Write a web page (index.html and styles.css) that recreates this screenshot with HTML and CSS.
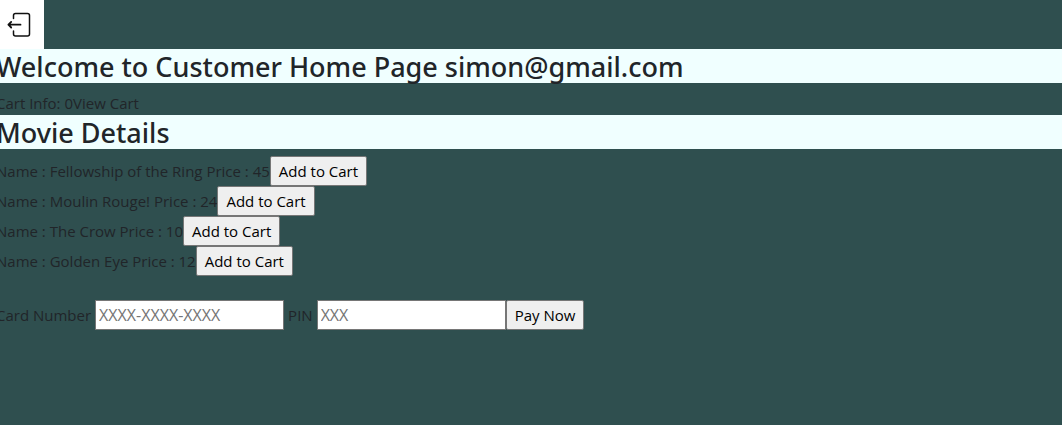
FILE: index.html
```html
<!DOCTYPE html>
<html lang="en">
<head>
<meta charset="utf-8">
<title>Customer Home Page</title>
<link rel="stylesheet" href="styles.css">
</head>
<body>
<main class="page">
  <a class="logout" href="#" aria-label="Log out">
    <svg class="logout-icon" viewBox="0 0 32 32" fill="none" stroke="#111" stroke-width="1.5" stroke-linecap="round" stroke-linejoin="round" aria-hidden="true">
      <path d="M9.500 9.500V6.500Q9.500 4.500 11.500 4.500H23.500Q25.500 4.500 25.500 6.500V25Q25.500 27 23.500 27H11.500Q9.500 27 9.500 25V22"/>
      <path d="M16.500 15.700H4.500M7.200 12.900L4.400 15.700L7.200 18.500" stroke-width="1.800"/>
    </svg>
  </a>
  <h1 class="heading">Welcome to Customer Home Page simon@gmail.com</h1>
  <div class="cart">Cart Info: 0<a class="cart-link" href="#">View Cart</a></div>
  <h2 class="heading">Movie Details</h2>
  <ul class="movies">
    <li class="row">Name : Fellowship of the Ring Price : 45<button class="button" type="button">Add to Cart</button></li>
    <li class="row">Name : Moulin Rouge! Price : 24<button class="button" type="button">Add to Cart</button></li>
    <li class="row">Name : The Crow Price : 10<button class="button" type="button">Add to Cart</button></li>
    <li class="row">Name : Golden Eye Price : 12<button class="button" type="button">Add to Cart</button></li>
  </ul>
  <form class="row payment">
    <label class="label" for="card">Card Number</label>
    <input class="field" id="card" type="text" placeholder="XXXX-XXXX-XXXX">
    <label class="label pin-label" for="pin">PIN</label>
    <input class="field" id="pin" type="text" placeholder="XXX">
    <button class="button" type="button">Pay Now</button>
  </form>
</main>
</body>
</html>
```
FILE: styles.css
```css
* { box-sizing: border-box; }

body {
  margin: 0;
  overflow-x: hidden;
  background: #2f4f4f;
  color: #212529;
  font: 400 15px/24px "Segoe UI", "Open Sans", "Noto Sans", sans-serif;
}

.page { margin-left: -4px; }

.logout {
  display: flex;
  align-items: center;
  justify-content: center;
  width: 48px;
  height: 49px;
  background: #fff;
}

.logout-icon { width: 32px; height: 32px; }

.heading {
  margin: 0 0 8px;
  padding-top: 2px;
  background: #f0ffff;
  font-family: "Segoe UI", "Noto Sans", "Open Sans", sans-serif;
  font-size: 27px;
  font-weight: 500;
  line-height: 32px;
}

.cart-link { color: inherit; text-decoration: none; }

.movies {
  margin: -1px 0 24px;
  padding: 0;
  list-style: none;
}

.row {
  display: flex;
  align-items: center;
  height: 30px;
}

.button {
  height: 30px;
  padding: 0 8px;
  border: 1px solid #767676;
  border-radius: 2px;
  background: #efefef;
  color: #000;
  font: inherit;
}

.field {
  width: 189px;
  height: 30px;
  padding: 0 3px;
  border: 1px solid #767676;
  border-radius: 0;
  background: #fff;
  color: #000;
  font: inherit;
  font-size: 16px;
}

.field::placeholder { color: #757575; opacity: 1; }

.label { margin-right: 4px; }

.pin-label { margin-left: 4px; }
```
